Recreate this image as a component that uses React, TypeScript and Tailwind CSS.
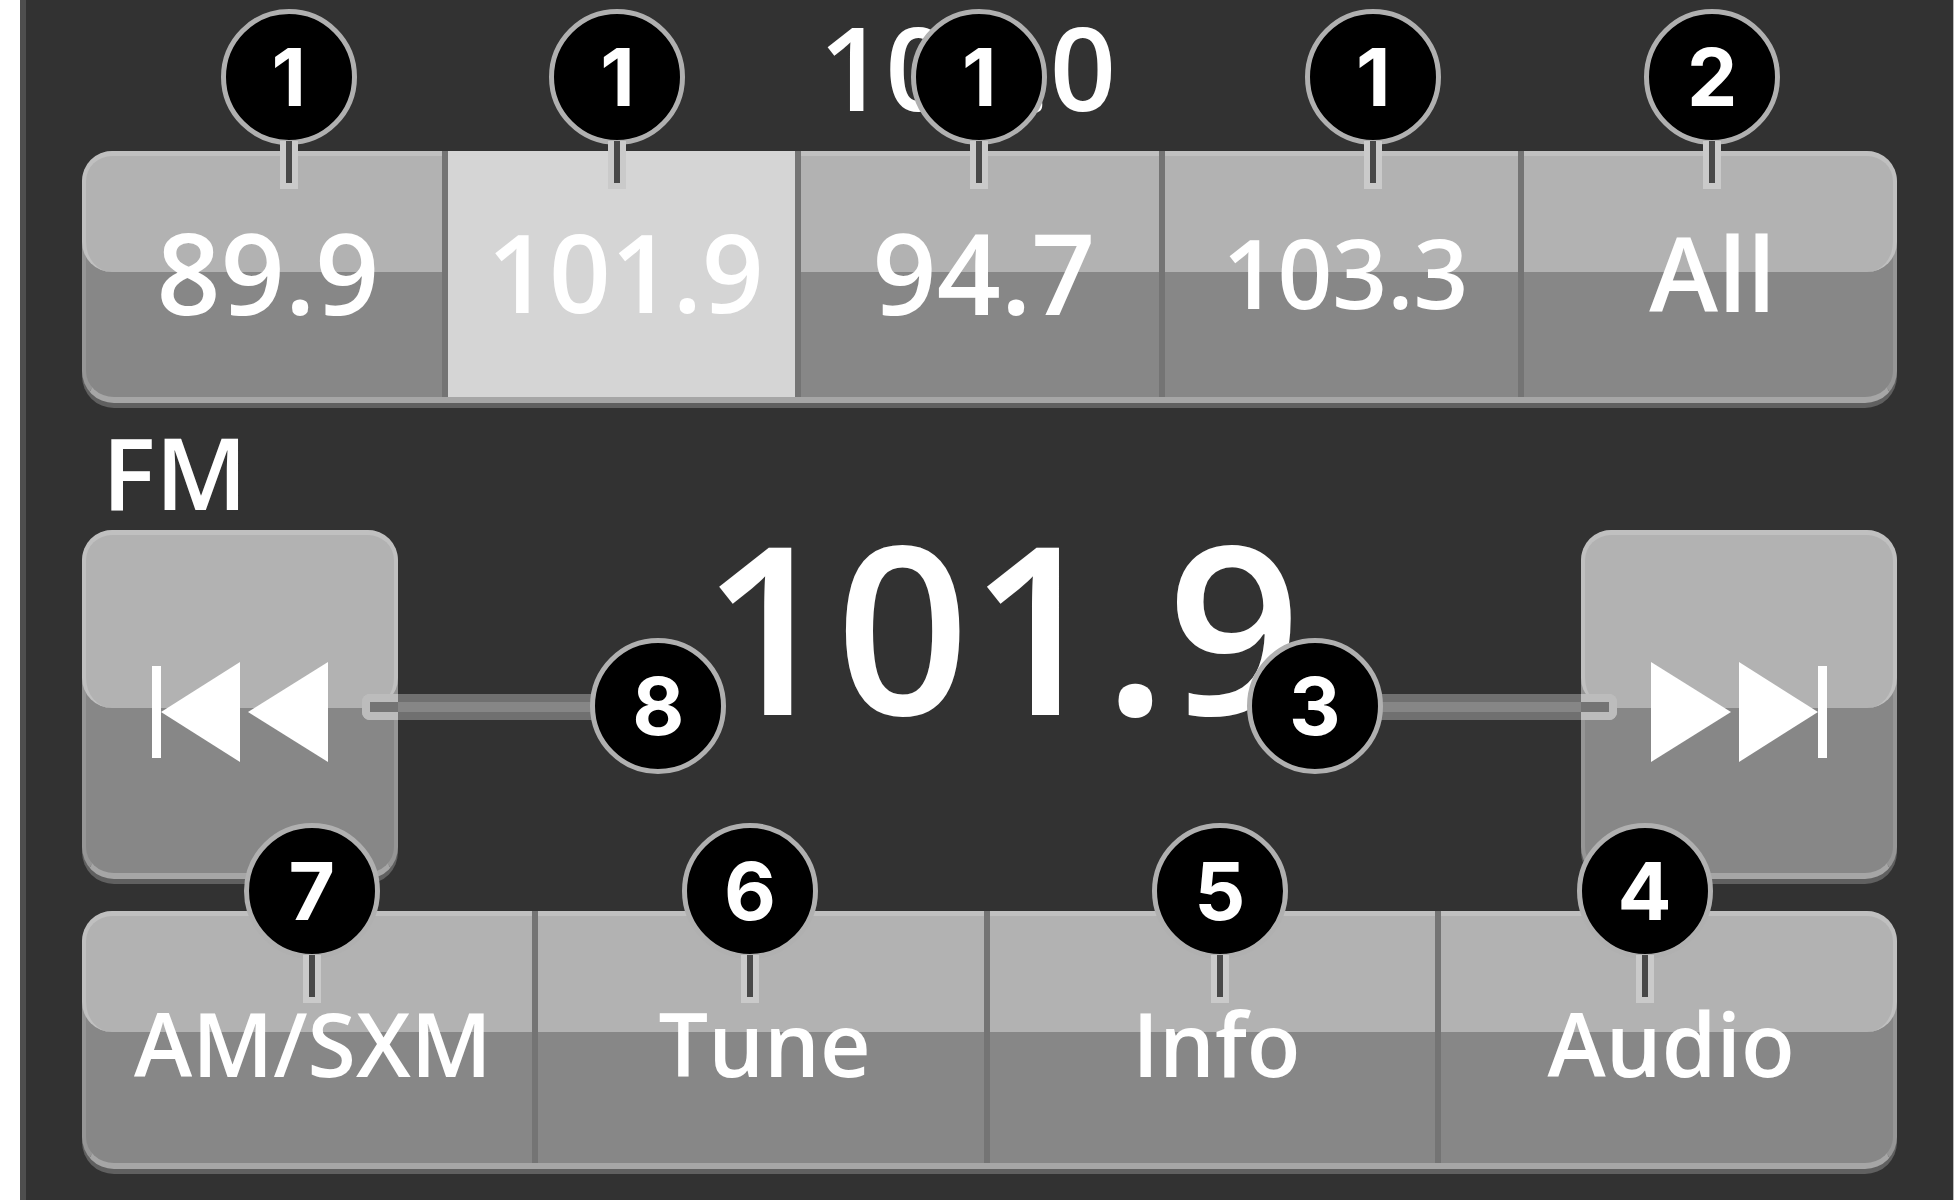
import { useState } from "react";
import clsx from "clsx";

const presets = [
  { label: "89.9", size: "text-[112px]", callout: 1, pin: "left-[56%]" },
  { label: "101.9", size: "text-[108px]", callout: 1, pin: "left-[48%]" },
  { label: "94.7", size: "text-[112px]", callout: 1, pin: "left-[49%]" },
  { label: "103.3", size: "text-[96px]", callout: 1, pin: "left-[58%]" },
  { label: "All", size: "text-[104px]", callout: 2, pin: "left-[51%]" },
];

const actions = [
  { label: "AM/SXM", callout: 7, pin: "left-1/2" },
  { label: "Tune", callout: 6, pin: "left-[47%]" },
  { label: "Info", callout: 5, pin: "left-[51%]" },
  { label: "Audio", callout: 4, pin: "left-[45%]" },
];

function Badge({ n }: { n: number }) {
  return (
    <span className="flex size-[136px] items-center justify-center rounded-full border-[5px] border-[#b0b0b0] bg-black font-[Inter,sans-serif] text-[80px] leading-none font-bold text-white">
      {n}
    </span>
  );
}

// Numbered badge with a short line pointing down at its button
function Callout({ n, className }: { n: number; className: string }) {
  return (
    <span
      className={clsx(
        "pointer-events-none absolute z-10 flex -translate-x-1/2 flex-col items-center",
        className
      )}
    >
      <Badge n={n} />
      <span className="-mt-1 h-12 w-[18px] border-x-[6px] border-b-[6px] border-[#cacaca] bg-[#484848]" />
    </span>
  );
}

function Gloss({ height }: { height: string }) {
  return (
    <span
      className={clsx(
        "absolute -inset-x-1 top-0 rounded-[30px] border-x-4 border-t-[5px] border-[#c0c0c0] bg-[#b2b2b2]",
        height
      )}
    />
  );
}

const panel =
  "relative rounded-[32px] border-x-4 border-b-[6px] border-x-[#969696] border-b-[#a6a6a6] bg-[#878787] shadow-[0_5px_0_#606060]";

function SkipIcon({ flip }: { flip?: boolean }) {
  return (
    <svg
      viewBox="0 0 176 100"
      className={clsx("relative h-[100px] w-[176px]", flip && "-scale-x-100")}
      fill="white"
      aria-hidden="true"
    >
      <rect x="0" y="4" width="9" height="92" />
      <path d="M9 50 L88 0 V100 Z" />
      <path d="M96 50 L176 0 V100 Z" />
    </svg>
  );
}

// Side line from a badge, with a brighter outlined tip where it lies on the button
function SideLine({ right }: { right?: boolean }) {
  return (
    <span
      className={clsx(
        "absolute top-[164px] flex h-[26px] w-[22%]",
        right ? "-right-9 flex-row-reverse" : "-left-9"
      )}
    >
      <span
        className={clsx(
          "w-9 border-y-8 border-[#bcbcbc] bg-[#747474]",
          right ? "rounded-r-lg border-r-8" : "rounded-l-lg border-l-8"
        )}
      />
      <span className="flex-1 border-y-8 border-[#707070] bg-[#868686]" />
    </span>
  );
}

export default function App() {
  const [selected, setSelected] = useState("101.9");

  return (
    <div className="min-h-screen bg-white pl-5">
      <main className="min-h-screen overflow-hidden border-r border-l-[6px] border-r-[#bbb] border-l-[#4e4e4e] bg-[#323232] px-14 pb-8 font-['Open_Sans','Noto_Sans',sans-serif] font-semibold text-white">
        <header className="flex h-[151px] items-center justify-center pr-11 pb-5">
          <span className="text-[116px] leading-none">100.0</span>
        </header>

        <section
          className={clsx(
            panel,
            "grid h-[252px] grid-cols-[363fr_354fr_365fr_360fr_370fr]"
          )}
        >
          <Gloss height="h-[49%]" />
          {presets.map((p, i) => (
            <div key={p.label} className="relative">
              <button
                type="button"
                aria-pressed={selected === p.label}
                onClick={() => setSelected(p.label)}
                className={clsx(
                  "flex h-full w-full items-center justify-center pb-1 pl-2 leading-none",
                  p.size,
                  i < presets.length - 1 && "border-r-[6px] border-[#747474]",
                  selected === p.label && "bg-[#d5d5d5]"
                )}
              >
                {p.label}
              </button>
              <Callout n={p.callout} className={clsx("-top-[142px]", p.pin)} />
            </div>
          ))}
        </section>

        <div className="flex h-[127px] items-center pt-2 pl-5">
          <h1 className="text-[100px] leading-none">FM</h1>
        </div>

        <section className="flex h-[349px]">
          <button
            type="button"
            aria-label="Previous station"
            className={clsx(
              panel,
              "flex w-[316px] shrink-0 items-center justify-center pt-5"
            )}
          >
            <Gloss height="h-[52%]" />
            <SkipIcon />
          </button>

          <div className="relative z-10 flex-1">
            <div className="flex h-[190px] items-center justify-center pl-6">
              <span className="text-[234px] leading-none">101.9</span>
            </div>
            <SideLine />
            <SideLine right />
            <span className="absolute top-[108px] left-[22%] -translate-x-1/2">
              <Badge n={8} />
            </span>
            <span className="absolute top-[108px] right-[22.5%] translate-x-1/2">
              <Badge n={3} />
            </span>
          </div>

          <button
            type="button"
            aria-label="Next station"
            className={clsx(
              panel,
              "flex w-[316px] shrink-0 items-center justify-center pt-5"
            )}
          >
            <Gloss height="h-[52%]" />
            <SkipIcon flip />
          </button>
        </section>

        <nav className={clsx(panel, "z-10 mt-8 grid h-[258px] grid-cols-4")}>
          <Gloss height="h-[48%]" />
          {actions.map((a, i) => (
            <div key={a.label} className="relative">
              <button
                type="button"
                className={clsx(
                  "flex h-full w-full items-center justify-center pt-3 pl-2 text-[88px] leading-none",
                  i < actions.length - 1 && "border-r-[6px] border-[#747474]"
                )}
              >
                {a.label}
              </button>
              <Callout n={a.callout} className={clsx("-top-[88px]", a.pin)} />
            </div>
          ))}
        </nav>
      </main>
    </div>
  );
}
